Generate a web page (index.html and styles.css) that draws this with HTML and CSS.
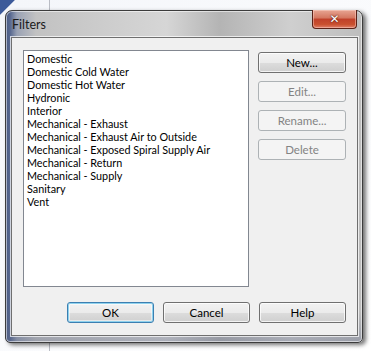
FILE: index.html
```html
<!DOCTYPE html>
<html>
<head>
<meta charset="utf-8">
<title>Filters</title>
<link rel="stylesheet" href="styles.css">
</head>
<body>
<div class="desk">
  <div class="window">
    <div class="titlebar">
      <span class="title">Filters</span>
      <div class="close"><span>✕</span></div>
    </div>
    <div class="client">
      <div class="top-row">
        <div class="listbox">
          <div class="item">Domestic</div>
          <div class="item">Domestic Cold Water</div>
          <div class="item">Domestic Hot Water</div>
          <div class="item">Hydronic</div>
          <div class="item">Interior</div>
          <div class="item">Mechanical - Exhaust</div>
          <div class="item">Mechanical - Exhaust Air to Outside</div>
          <div class="item">Mechanical - Exposed Spiral Supply Air</div>
          <div class="item">Mechanical - Return</div>
          <div class="item">Mechanical - Supply</div>
          <div class="item">Sanitary</div>
          <div class="item">Vent</div>
        </div>
        <div class="side-buttons">
          <div class="btn">New...</div>
          <div class="btn disabled">Edit...</div>
          <div class="btn disabled">Rename...</div>
          <div class="btn disabled">Delete</div>
        </div>
      </div>
      <div class="bottom-row">
        <div class="btn wide default">OK</div>
        <div class="btn wide">Cancel</div>
        <div class="btn wide">Help</div>
      </div>
    </div>
  </div>
</div>
</body>
</html>
```

FILE: styles.css
```css
html, body {
  margin: 0;
  padding: 0;
}
body {
  width: 371px;
  height: 351px;
  overflow: hidden;
  font-family: Lato, "Open Sans", "DejaVu Sans", sans-serif;
  font-size: 10.8px;
  color: #000;
}
.desk {
  width: 371px;
  height: 351px;
  padding: 10px 0 0 5px;
  box-sizing: border-box;
  background:
    linear-gradient(to right, transparent 49px, #b9bcc4 49px, #b9bcc4 50px, transparent 50px),
    linear-gradient(135deg, #3c5a9a 0px, #3c5a9a 10px, #f4f6fa 11px, #ffffff 100%);
}
.window {
  width: 358px;
  height: 333px;
  box-sizing: border-box;
  border: 1px solid #3c3c3c;
  border-radius: 7px 7px 5px 5px;
  background:
    linear-gradient(to bottom, transparent 300px, rgba(90,100,130,0.35) 330px),
    linear-gradient(to right, #4a5b84 0px, #56678f 4px, #9aa2b4 11px, #c2c2c2 30px, #d6d6d6 45%, #b4b4b4 60%, #cfcfcf 80%, #bdbdbd 100%);
  box-shadow: 3px 2px 4px rgba(0,0,0,0.55), inset 0 0 0 1px rgba(255,255,255,0.55);
  display: flex;
  flex-direction: column;
  padding: 0 4px 6px 5px;
}
.titlebar {
  height: 26px;
  display: flex;
  align-items: flex-start;
  flex-shrink: 0;
}
.title {
  font-size: 12.5px;
  color: #1a1a1a;
  margin: 6px 0 0 1px;
}
.close {
  margin-left: auto;
  margin-right: 1px;
  margin-top: -1px;
  width: 45px;
  height: 19px;
  box-sizing: border-box;
  border: 1px solid #5a2218;
  border-top: none;
  border-radius: 0 0 4px 4px;
  background: linear-gradient(to bottom, #e7a593 0%, #d4765f 45%, #c0402a 50%, #c9502f 80%, #e0806a 100%);
  box-shadow: inset 0 0 0 1px rgba(255,220,210,0.45);
  display: flex;
  align-items: center;
  justify-content: center;
}
.close span {
  color: #fff;
  font-family: "DejaVu Sans", sans-serif;
  font-weight: bold;
  font-size: 12px;
  line-height: 1;
  text-shadow: 0 0 1px #5a1a10, 0 0 2px #5a1a10;
}
.client {
  flex: 1;
  border: 1px solid #6f6f6f;
  box-shadow: 0 0 0 1px rgba(255,255,255,0.7);
  background: #f0f0f0;
  padding: 12px 11px 12px 11px;
  display: flex;
  flex-direction: column;
}
.top-row {
  display: flex;
  gap: 9px;
}
.listbox {
  width: 226px;
  height: 237px;
  box-sizing: border-box;
  border: 1px solid #828790;
  background: #fff;
  padding: 1px 2px 0;
}
.item {
  height: 13px;
  line-height: 13px;
  white-space: nowrap;
  padding-left: 1px;
}
.side-buttons {
  display: flex;
  flex-direction: column;
  gap: 8px;
  padding-top: 2px;
}
.btn {
  width: 88px;
  height: 21px;
  box-sizing: border-box;
  border: 1px solid #707070;
  border-radius: 3px;
  background: linear-gradient(to bottom, #f2f2f2 0%, #ebebeb 50%, #dddddd 50%, #cfcfcf 100%);
  box-shadow: inset 0 0 0 1px rgba(255,255,255,0.75);
  display: flex;
  align-items: center;
  justify-content: center;
  font-size: 11.5px;
  color: #000;
}
.btn.disabled {
  border-color: #adb2b5;
  background: #f4f4f4;
  box-shadow: none;
  color: #838383;
}
.btn.wide {
  width: 87px;
}
.btn.default {
  border-color: #3c7fb1;
  box-shadow: inset 0 0 0 1px #8fd2ee, inset 0 0 0 2px rgba(255,255,255,0.5);
}
.bottom-row {
  margin-top: 15px;
  display: flex;
  justify-content: flex-end;
  gap: 9px;
}
```
